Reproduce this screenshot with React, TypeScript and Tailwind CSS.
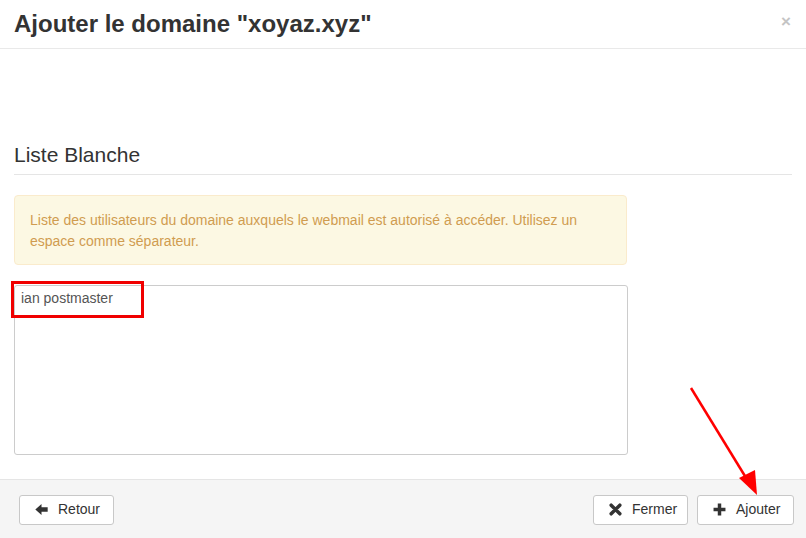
import React from "react";

function ArrowLeftIcon() {
  return (
    <svg width="13" height="13" viewBox="0 0 12 12" className="shrink-0">
      <path d="M0.3 6 L6 1 L6 4 L11.7 4 L11.7 8 L6 8 L6 11 Z" fill="#333" />
    </svg>
  );
}

function TimesIcon() {
  return (
    <svg width="13" height="13" viewBox="0 0 12 12" className="shrink-0">
      <path d="M2 2 L10 10 M10 2 L2 10" stroke="#333" strokeWidth="3.2" strokeLinecap="round" />
    </svg>
  );
}

function PlusIcon() {
  return (
    <svg width="13" height="13" viewBox="0 0 12 12" className="shrink-0">
      <path d="M6 0.5 L6 11.5 M0.5 6 L11.5 6" stroke="#333" strokeWidth="3.2" />
    </svg>
  );
}

function FooterButton({ icon, label, className }: { icon: React.ReactNode; label: string; className?: string }) {
  return (
    <button
      type="button"
      className={
        "flex h-[30px] items-center gap-[10px] rounded-[3px] border border-[#c8c8c8] bg-white pl-[15px] pr-[15px] text-[14px] text-[#333] " +
        (className ?? "")
      }
    >
      {icon}
      <span>{label}</span>
    </button>
  );
}

export default function App() {
  return (
    <div className="relative h-[538px] w-[806px] overflow-hidden bg-white font-['Liberation_Sans',Arial,sans-serif]">
      {/* Header */}
      <div className="flex h-[49px] items-center justify-between border-b border-[#e9e9e9] pl-[14px] pr-[15px]">
        <h1 className="text-[24px] font-bold leading-none text-[#333]">Ajouter le domaine "xoyaz.xyz"</h1>
        <span className="-mt-[6px] text-[17px] font-bold leading-none text-[#c4c4c4]">×</span>
      </div>

      {/* Body */}
      <div className="flex h-[430px] flex-col px-[14px]">
        <div className="h-[94px]" />
        <h3 className="border-b border-[#e5e5e5] pb-[8px] text-[21px] leading-[23px] text-[#333]">Liste Blanche</h3>
        <div className="mt-[20px] w-[613px] rounded-[4px] border border-[#faebcc] bg-[#fcf8e3] px-[15px] pb-[12px] pt-[14px] text-[14px] leading-[21px] text-[#d09c50]">
          Liste des utilisateurs du domaine auxquels le webmail est autorisé à accéder. Utilisez un espace comme séparateur.
        </div>
        <div className="relative mt-[20px] h-[170px] w-[614px] rounded-[3px] border border-[#cccccc] px-[6px] py-[2px] text-[14px] leading-[20px] text-[#555]">
          ian postmaster
          <div className="absolute -left-[4px] -top-[5px] h-[37px] w-[133px] border-[3px] border-[#f00000]" />
        </div>
      </div>

      {/* Footer */}
      <div className="flex h-[59px] items-center justify-between border-t border-[#e5e5e5] bg-[#f5f5f5] pl-[19px] pr-[12px] pt-[1px]">
        <FooterButton icon={<ArrowLeftIcon />} label="Retour" className="w-[95px]" />
        <div className="flex gap-[9px]">
          <FooterButton icon={<TimesIcon />} label="Fermer" className="w-[95px]" />
          <FooterButton icon={<PlusIcon />} label="Ajouter" className="w-[97px]" />
        </div>
      </div>

      {/* Annotation arrow */}
      <svg className="pointer-events-none absolute left-0 top-0" width="806" height="538">
        <line x1="691" y1="388" x2="748" y2="481" stroke="#f00" strokeWidth="2.5" />
        <path d="M757 495 L739 478 L755 470 Z" fill="#f00" />
      </svg>
    </div>
  );
}
